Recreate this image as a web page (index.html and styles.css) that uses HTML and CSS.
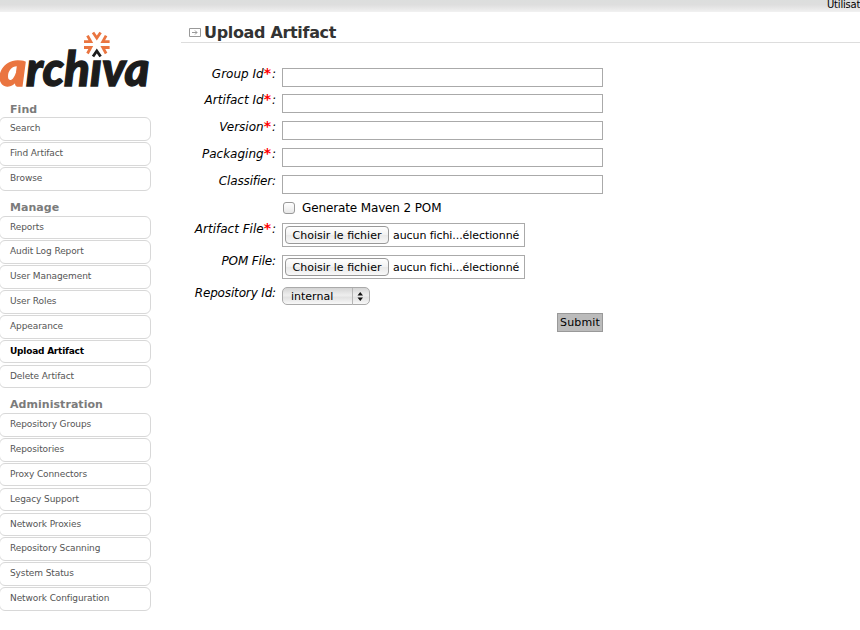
FILE: index.html
```html
<!DOCTYPE html>
<html lang="fr">
<head>
<meta charset="utf-8">
<title>Upload Artifact</title>
<link rel="stylesheet" href="styles.css">
</head>
<body>
<header class="topbar"><span>Utilisat</span></header>
<div class="page">
  <aside class="sidebar">
    <svg class="logo" width="151" height="64" viewBox="0 28 151 64" role="img" aria-label="archiva">
      <text class="logo-a" x="-.5" y="85.500" textLength="27" lengthAdjust="spacingAndGlyphs">a</text>
      <text class="logo-b" x="26" y="85.500" textLength="123.500" lengthAdjust="spacingAndGlyphs">rchıva</text>
      <g fill="none" stroke="#ea7540" stroke-width="2.800">
        <path d="M93 32.500l3.800 5.500 3.800-5.500"/>
        <path d="M84 41.700h6.800l-3.300-6M109.600 41.700h-6.800l3.300-6"/>
        <path d="M84 47.500h6.800l-3.300 6M109.600 47.500h-6.800l3.300 6"/>
      </g>
      <path fill="none" stroke="#1c1c1c" stroke-width="2.800" d="M93 56.500l3.800-5.500 3.800 5.500"/>
    </svg>
    <nav>
      <h2>Find</h2>
      <ul><li>Search</li><li>Find Artifact</li><li>Browse</li></ul>
      <h2>Manage</h2>
      <ul><li>Reports</li><li>Audit Log Report</li><li>User Management</li><li>User Roles</li><li>Appearance</li><li class="current">Upload Artifact</li><li>Delete Artifact</li></ul>
      <h2>Administration</h2>
      <ul><li>Repository Groups</li><li>Repositories</li><li>Proxy Connectors</li><li>Legacy Support</li><li>Network Proxies</li><li>Repository Scanning</li><li>System Status</li><li>Network Configuration</li></ul>
    </nav>
  </aside>
  <main>
    <h1>
      <svg width="12" height="9" viewBox="0 0 12 9" fill="none" stroke="#999"><path d="M.5.500h11v8H.500zM3 4.500h5M6 2.500l2 2-2 2"/></svg>
      <span>Upload Artifact</span>
    </h1>
    <form class="form">
      <div class="row"><label>Group Id<b>*</b>:</label><input class="field" type="text"></div>
      <div class="row"><label>Artifact Id<b>*</b>:</label><input class="field" type="text"></div>
      <div class="row"><label>Version<b>*</b>:</label><input class="field" type="text"></div>
      <div class="row"><label>Packaging<b>*</b>:</label><input class="field" type="text"></div>
      <div class="row"><label class="plain">Classifier:</label><input class="field" type="text"></div>
      <div class="row check"><span></span><div class="option"><input type="checkbox"><span>Generate Maven 2 POM</span></div></div>
      <div class="row tall"><label>Artifact File<b>*</b>:</label><div class="file"><button type="button">Choisir le fichier</button><span>aucun fichi...électionné</span></div></div>
      <div class="row tall"><label class="plain">POM File:</label><div class="file"><button type="button">Choisir le fichier</button><span>aucun fichi...électionné</span></div></div>
      <div class="row last"><label class="plain">Repository Id:</label><div class="select"><span>internal</span><svg width="17" height="17" viewBox="0 0 17 17"><path d="M.5 0v17" stroke="#b5b5b5"/><path d="M5.500 7.500h5.500L8.250 4zM5.500 9.500h5.500L8.250 13z" fill="#111"/></svg></div></div>
      <div class="actions"><button type="button" class="submit">Submit</button></div>
    </form>
  </main>
</div>
</body>
</html>
```
FILE: styles.css
```css
* { box-sizing: border-box; }
body {
  margin: 0;
  background: #fff;
  color: #000;
  font-family: "DejaVu Sans", Verdana, sans-serif;
  font-size: 12px;
  overflow: hidden;
}
.topbar {
  height: 12px;
  background: linear-gradient(#dcdedd, #dedede 40%, #f1f1f1);
  padding-left: 827px;
  font-size: 10px;
  letter-spacing: -0.200px;
  line-height: 10px;
  white-space: nowrap;
  overflow: hidden;
}
.page { display: flex; }
.sidebar { width: 181px; padding-top: 16px; flex: none; }
.logo { display: block; overflow: visible; }
.logo text {
  font-family: Lato, "Open Sans", sans-serif;
  font-size: 47.500px;
  font-weight: 900;
  font-style: italic;
  stroke-width: 1.300px;
}
.logo-a { fill: #ea7540; stroke: #ea7540; }
.logo-b { fill: #1c1c1c; stroke: #1c1c1c; }
nav { padding-top: 10.800px; }
h2 {
  margin: 0;
  padding-left: 10px;
  height: 14.700px;
  font-size: 11px;
  letter-spacing: 0.050px;
  line-height: 14.400px;
  color: #7b7b7b;
}
ul { list-style: none; margin: 0 0 10.100px; padding: 0; }
li {
  width: 152px;
  height: 23.600px;
  margin: 0 0 1.270px -1px;
  padding-left: 10px;
  border: 1px solid #d8d8d8;
  border-radius: 6px;
  font-size: 9px;
  letter-spacing: -0.100px;
  line-height: 20.800px;
  color: #555;
}
.current { font-weight: 700; letter-spacing: -0.220px; color: #000; }
main { flex: 1; min-width: 0; }
h1 {
  display: flex;
  align-items: center;
  gap: 3px;
  height: 31px;
  margin: 0;
  padding: 10px 0 0 8px;
  border-bottom: 1px solid #ddd;
  font-size: 16px;
  letter-spacing: -0.330px;
  color: #333;
}
.form { width: 422px; padding-top: 24.600px; }
.row {
  display: grid;
  grid-template-columns: 95px 321px;
  column-gap: 6px;
  height: 26.850px;
  align-items: start;
}
label {
  text-align: right;
  font-style: italic;
  line-height: 12px;
  white-space: nowrap;
}
label b { color: #f00; font-size: 14px; line-height: 1px; font-style: normal; margin-right: 1px; }
.plain { letter-spacing: -0.150px; }
.field {
  height: 19px;
  width: 321px;
  padding: 0;
  border: 1px solid #aaa;
  background: #fff;
}
.check { height: 21.500px; }
.option { display: flex; align-items: center; gap: 7px; height: 13px; padding-left: 1px; letter-spacing: -0.130px; }
.option input {
  appearance: none;
  width: 12px;
  height: 12px;
  margin: 0;
  border: 1px solid #999;
  border-radius: 3px;
  background: linear-gradient(#fff, #e8e8e8);
}
.tall { height: 32px; }
.file {
  display: flex;
  align-items: center;
  gap: 4px;
  width: 243px;
  height: 24px;
  padding-left: 2px;
  border: 1px solid #aaa;
  font-size: 11px;
  letter-spacing: -0.080px;
  white-space: nowrap;
}
.file button {
  width: 104px;
  height: 18px;
  padding: 0;
  border: 1px solid #999;
  border-radius: 4px;
  background: linear-gradient(#fff, #f2f2f2 50%, #e9e9e9 51%, #f8f8f8);
  font: inherit;
}
.last { height: 25.500px; }
.select {
  display: flex;
  align-items: center;
  justify-content: space-between;
  width: 88px;
  height: 18px;
  padding-left: 8px;
  border: 1px solid #aaa;
  border-radius: 5px;
  background: linear-gradient(#d4d4d4, #eee 45%, #e2e2e2 60%, #f8f8f8);
  font-size: 11px;
}
.actions { display: flex; justify-content: flex-end; }
.submit {
  width: 46px;
  height: 19px;
  padding: 1px 0 0;
  border: 1px solid #999;
  background: #bbb;
  font: 11px "DejaVu Sans", sans-serif;
  letter-spacing: 0.150px;
}
```
